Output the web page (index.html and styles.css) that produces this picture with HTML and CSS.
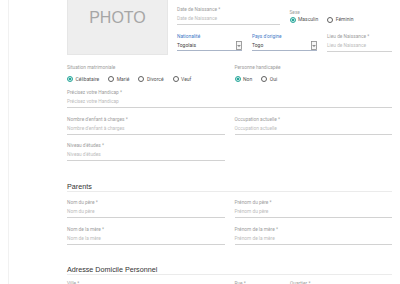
FILE: index.html
```html
<!DOCTYPE html>
<html lang="fr">
<head>
<meta charset="utf-8">
<title>Formulaire</title>
<link rel="stylesheet" href="styles.css">
</head>
<body>
<div class="page">
  <div class="top">
    <div class="photo">PHOTO</div>
    <div class="ident">
      <div class="row2">
        <div class="field f-date">
          <label>Date de Naissance *</label>
          <div class="ph">Date de Naissance</div>
        </div>
        <div class="group g-sexe">
          <div class="glabel">Sexe</div>
          <div class="radios">
            <span class="radio on"><i></i>Masculin</span>
            <span class="radio"><i></i>Féminin</span>
          </div>
        </div>
      </div>
      <div class="row3">
        <div class="field">
          <label class="blue">Nationalité</label>
          <div class="sel"><span>Togolais</span><svg width="6" height="9" viewBox="0 0 6 9"><rect x="0.5" y="0.5" width="5" height="8" fill="#f6f6f6" stroke="#8a8a8a" stroke-width="0.8"/><path d="M1.7 4 L3 5.4 L4.3 4" fill="none" stroke="#333" stroke-width="0.8"/></svg></div>
        </div>
        <div class="field">
          <label class="blue">Pays d'origine</label>
          <div class="sel"><span>Togo</span><svg width="6" height="9" viewBox="0 0 6 9"><rect x="0.5" y="0.5" width="5" height="8" fill="#f6f6f6" stroke="#8a8a8a" stroke-width="0.8"/><path d="M1.7 4 L3 5.4 L4.3 4" fill="none" stroke="#333" stroke-width="0.8"/></svg></div>
        </div>
        <div class="field">
          <label>Lieu de Naissance *</label>
          <div class="ph">Lieu de Naissance</div>
        </div>
      </div>
    </div>
  </div>

  <div class="cols row-a">
    <div class="group">
      <div class="glabel">Situation matrimoniale</div>
      <div class="radios r-low">
        <span class="radio on"><i></i>Célibataire</span>
        <span class="radio"><i></i>Marié</span>
        <span class="radio"><i></i>Divorcé</span>
        <span class="radio"><i></i>Veuf</span>
      </div>
    </div>
    <div class="group">
      <div class="glabel">Personne handicapée</div>
      <div class="radios r-low">
        <span class="radio on"><i></i>Non</span>
        <span class="radio"><i></i>Oui</span>
      </div>
    </div>
  </div>

  <div class="field row-b">
    <label>Précisez votre Handicap *</label>
    <div class="ph">Précisez votre Handicap</div>
  </div>

  <div class="cols row-c">
    <div class="field">
      <label>Nombre d'enfant à charges *</label>
      <div class="ph">Nombre d'enfant à charges</div>
    </div>
    <div class="field">
      <label>Occupation actuelle *</label>
      <div class="ph">Occupation actuelle</div>
    </div>
  </div>

  <div class="cols row-d">
    <div class="field">
      <label>Niveau d'études *</label>
      <div class="ph">Niveau d'études</div>
    </div>
  </div>

  <h2 class="section s-parents">Parents</h2>

  <div class="cols row-e">
    <div class="field">
      <label>Nom du père *</label>
      <div class="ph">Nom du père</div>
    </div>
    <div class="field">
      <label>Prénom du père *</label>
      <div class="ph">Prénom du père</div>
    </div>
  </div>

  <div class="cols row-f">
    <div class="field">
      <label>Nom de la mère *</label>
      <div class="ph">Nom de la mère</div>
    </div>
    <div class="field">
      <label>Prénom de la mère *</label>
      <div class="ph">Prénom de la mère</div>
    </div>
  </div>

  <h2 class="section s-adresse">Adresse Domicile Personnel</h2>

  <div class="cols row-g">
    <div class="field">
      <label>Ville *</label>
      <div class="ph">Ville</div>
    </div>
    <div class="sub">
      <div class="field">
        <label>Rue *</label>
        <div class="ph">Rue</div>
      </div>
      <div class="field">
        <label>Quartier *</label>
        <div class="ph">Quartier</div>
      </div>
    </div>
  </div>
</div>
</body>
</html>
```

FILE: styles.css
```css
html, body {
  margin: 0;
  padding: 0;
  background: #ffffff;
}

body {
  font-family: Roboto, "Liberation Sans", sans-serif;
}

.page {
  margin-left: 8px;
  border-left: 1px solid #f1f1f1;
  padding: 0 8px 0 58px;
  height: 284px;
  overflow: hidden;
  box-sizing: border-box;
}

.top {
  display: grid;
  grid-template-columns: 101px 1fr;
  column-gap: 9px;
  align-items: start;
}

.photo {
  height: 55px;
  box-sizing: border-box;
  background: #eeeeee;
  border: 1px solid #e6e6e6;
  border-top: none;
  color: #a6a6a6;
  font-family: "Liberation Sans", Arial, sans-serif;
  font-size: 16px;
  line-height: 20px;
  padding-top: 8px;
  text-align: center;
}

.row2 {
  display: grid;
  grid-template-columns: 1fr 1fr;
  column-gap: 10px;
  align-items: start;
}

.f-date {
  margin-top: 4.5px;
}

.g-sexe {
  padding-top: 9px;
}

.g-sexe .glabel {
  line-height: 7px;
}

.g-sexe .radios {
  line-height: 7px;
  height: 7px;
}

.row3 {
  display: grid;
  grid-template-columns: repeat(3, 1fr);
  column-gap: 10px;
  margin-top: 7px;
}

.glabel {
  font-size: 4.8px;
  line-height: 9px;
  color: #9e9e9e;
  white-space: nowrap;
}

.radios {
  display: flex;
  align-items: center;
  height: 9px;
}

.r-low {
  margin-top: 3px;
}

.radio {
  display: flex;
  align-items: center;
  gap: 2.5px;
  margin-right: 9px;
  font-size: 5px;
  color: #555555;
  white-space: nowrap;
}

.radio i {
  display: block;
  width: 6px;
  height: 6px;
  box-sizing: border-box;
  border: 1px solid #616161;
  border-radius: 50%;
}

.radio.on i {
  border-color: #26a69a;
  background: radial-gradient(circle, #26a69a 0 1.3px, #cdece8 1.6px);
}

.field label {
  display: block;
  font-size: 4.8px;
  line-height: 9px;
  color: #9e9e9e;
  white-space: nowrap;
}

.field label.blue {
  color: #3f7bc8;
}

.field .ph {
  font-size: 4.8px;
  line-height: 9px;
  color: #bcbcbc;
  padding-bottom: 1px;
  border-bottom: 1px solid #d2d2d2;
  white-space: nowrap;
}

.sel {
  display: flex;
  justify-content: space-between;
  align-items: center;
  height: 9px;
  border-bottom: 1px solid #aab5c8;
  font-size: 5px;
  color: #444444;
  padding-bottom: 0.5px;
}

.sel svg {
  display: block;
}

.cols {
  display: grid;
  grid-template-columns: 1fr 1fr;
  column-gap: 10px;
}

.row-a { margin-top: 7.5px; }
.row-b { margin-top: 4px; }
.row-c { margin-top: 7px; }
.row-d { margin-top: 6px; }
.row-e { margin-top: 5.5px; }
.row-f { margin-top: 7px; }
.row-g { margin-top: 3.5px; }

.sub {
  display: grid;
  grid-template-columns: 45.5px 1fr;
  column-gap: 10px;
}

.section {
  font-family: "Liberation Sans", Arial, sans-serif;
  font-weight: normal;
  font-size: 7.2px;
  line-height: 8px;
  color: #333333;
  margin: 0;
  padding-bottom: 0.5px;
  border-bottom: 1px solid #ebebeb;
}

.s-parents { margin-top: 22px; }
.s-adresse { margin-top: 21px; }
```
